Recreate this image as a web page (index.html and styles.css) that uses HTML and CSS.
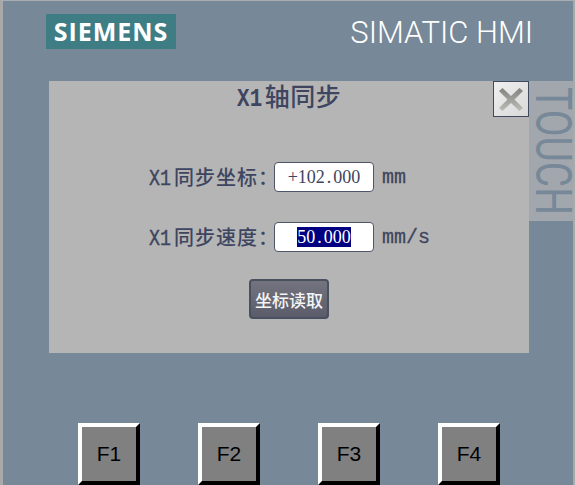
FILE: index.html
```html
<!DOCTYPE html>
<html lang="en">
<head>
    <meta charset="UTF-8">
    <meta name="viewport" content="width=device-width, initial-scale=1.0">
    <title>SIMATIC HMI</title>
    <link rel="stylesheet" href="styles.css">
</head>
<body>
<div class="screen">
    <div class="top-bar">
        <div class="logo">SIEMENS</div>
        <div class="brand">SIMATIC HMI</div>
    </div>

    <div class="middle">
        <div class="panel">
            <h2 class="panel-title"><span class="latin">X1</span>轴同步</h2>
            <button class="close-button" aria-label="Close">
                <svg width="24" height="23" viewBox="0 0 24 23">
                    <defs>
                        <linearGradient id="crossFill" x1="0" y1="0" x2="0" y2="1">
                            <stop offset="0" stop-color="#828380"/>
                            <stop offset="1" stop-color="#bcbdb5"/>
                        </linearGradient>
                    </defs>
                    <path d="M3.500 0 L12 8 L20.500 0 L24 3 L15.500 11.500 L24 20 L20.500 23 L12 15 L3.500 23 L0 20 L8.500 11.500 L0 3 Z" fill="url(#crossFill)"/>
                </svg>
            </button>

            <div class="field-row first">
                <label class="field-label"><span class="latin">X1</span><span class="cjk">同步坐标：</span></label>
                <div class="field-value">+102<span class="dot">.</span>000</div>
                <span class="field-unit">mm</span>
            </div>
            <div class="field-row">
                <label class="field-label"><span class="latin">X1</span><span class="cjk">同步速度：</span></label>
                <div class="field-value"><span class="selected">50<span class="dot">.</span>000</span></div>
                <span class="field-unit">mm/s</span>
            </div>

            <button class="read-button">坐标读取</button>
        </div>
        <div class="touch-strip"><span class="touch-text">TOUCH</span></div>
    </div>

    <div class="fkeys">
        <button class="fkey">F1</button>
        <button class="fkey">F2</button>
        <button class="fkey">F3</button>
        <button class="fkey">F4</button>
    </div>
</div>
</body>
</html>
```

FILE: styles.css
```css
/* General styles */
html, body {
    margin: 0;
    padding: 0;
    height: 100%;
    overflow: hidden;
}

.screen {
    box-sizing: border-box;
    width: 575px;
    height: 485px;
    display: flex;
    flex-direction: column;
    background-color: #778899;
    border-top: 1px solid #a9adb2;
    border-left: 3px solid #a9a9a9;
    border-right: 2px solid #a9a9a9;
    overflow: hidden;
}

/* Top bar */
.top-bar {
    height: 80px;
    display: flex;
    align-items: flex-start;
    justify-content: space-between;
    padding: 13px 40px 0 43px;
    box-sizing: border-box;
}

.logo {
    width: 130px;
    height: 35px;
    line-height: 35px;
    text-align: center;
    background-color: #3f7d84;
    color: #fff;
    font-family: "Open Sans", sans-serif;
    font-size: 25px;
    font-weight: 700;
    letter-spacing: 1px;
}

.brand {
    margin-top: 3px;
    color: #fff;
    font-family: Roboto, sans-serif;
    font-size: 31px;
    font-weight: 300;
    line-height: 32px;
}

/* Middle area */
.middle {
    display: flex;
    align-items: flex-start;
    padding-left: 46px;
}

.panel {
    position: relative;
    box-sizing: border-box;
    width: 480px;
    height: 272px;
    background-color: #b5b5b5;
    color: #3d4560;
    font-family: "Liberation Serif", "Noto Sans CJK SC", serif;
}

.panel-title {
    box-sizing: border-box;
    height: 29px;
    margin: 0;
    text-align: center;
    font-family: "Noto Sans CJK SC", sans-serif;
    font-size: 25px;
    font-weight: 500;
    letter-spacing: 0.5px;
    line-height: 29px;
}

/* narrow half-width latin, the mono face squeezed a bit */
.latin {
    display: inline-block;
    width: 22px;
    font-family: "Liberation Mono", monospace;
    font-size: 22px;
    line-height: 20px;
    -webkit-text-stroke: 0.4px #3d4560;
    transform: scaleX(0.83);
    transform-origin: left center;
}

.panel-title .latin {
    width: 28px;
    font-size: 25px;
    font-weight: 700;
    -webkit-text-stroke: 0;
}

.close-button {
    position: absolute;
    top: 0;
    right: 0;
    width: 36px;
    height: 36px;
    padding: 0;
    display: flex;
    align-items: center;
    justify-content: center;
    background: linear-gradient(135deg, #efefef, #d9d9d9);
    border: 1px solid #3f4a5c;
}

.field-row {
    display: flex;
    align-items: center;
    height: 30px;
    margin-top: 30px;
    padding-left: 100px;
}

.field-row.first {
    margin-top: 52px;
}

.field-label {
    width: 125px;
    height: 30px;
    line-height: 30px;
    white-space: nowrap;
}

.field-label .cjk {
    margin-left: 3px;
    font-family: "Noto Sans CJK SC", sans-serif;
    font-size: 20px;
    font-weight: 500;
    letter-spacing: 1px;
}

.field-value {
    box-sizing: border-box;
    width: 100px;
    height: 30px;
    line-height: 28px;
    text-align: center;
    background-color: #fff;
    border: 1px solid #4d5568;
    border-radius: 4px;
    font-size: 18px;
}

.selected {
    background-color: #000080;
    color: #fff;
}

/* the period takes a full digit cell in the original font */
.dot {
    margin: 0 2px;
}

.field-unit {
    margin-left: 8px;
    font-family: "Liberation Mono", monospace;
    font-size: 20px;
    -webkit-text-stroke: 0.3px #3d4560;
}

.read-button {
    display: block;
    box-sizing: border-box;
    width: 80px;
    height: 40px;
    margin: 27px 0 0 200px;
    padding: 0;
    color: #f4f4f4;
    font-family: "Noto Sans CJK SC", sans-serif;
    font-size: 17px;
    font-weight: 500;
    background: linear-gradient(#73747f, #5a5c6a);
    border: 2px solid #49515f;
    border-radius: 4px;
}

/* TOUCH label */
.touch-strip {
    width: 44px;
    height: 140px;
    background-color: #a1a7ac;
    display: flex;
    align-items: center;
    justify-content: center;
}

.touch-text {
    display: block;
    writing-mode: vertical-rl;
    color: #778899;
    font-family: Roboto, sans-serif;
    font-size: 39px;
    font-weight: 400;
    line-height: 34px;
    transform: translateX(2px) scaleX(1.3);
}

/* Function keys */
.fkeys {
    display: flex;
    gap: 58px;
    margin-top: 70px;
    padding-left: 75px;
}

.fkey {
    box-sizing: border-box;
    width: 62px;
    height: 62px;
    padding: 0;
    background-color: #808080;
    color: #000;
    font-family: "Liberation Sans", sans-serif;
    font-size: 21px;
    border-style: solid;
    border-width: 4px;
    border-color: #fff #000 #000 #fff;
}
```
